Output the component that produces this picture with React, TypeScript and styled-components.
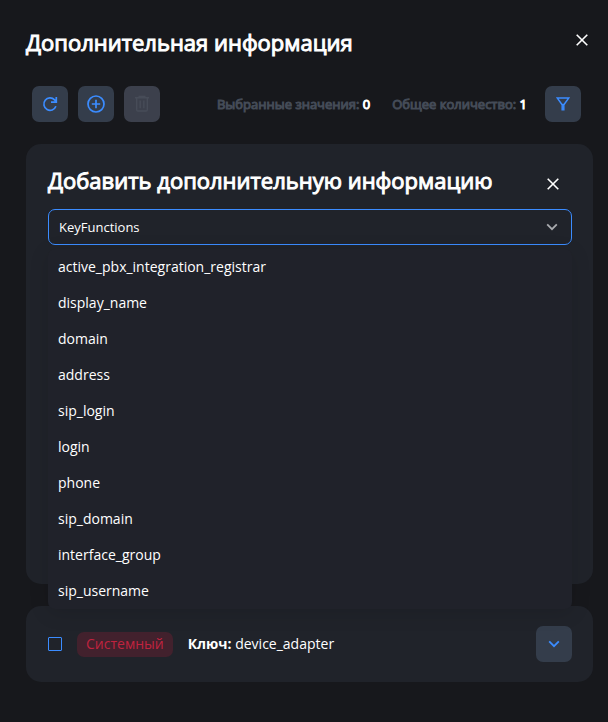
import React, { useState } from "react";
import styled, { createGlobalStyle, css } from "styled-components";

const color = {
  page: "#17181c",
  card: "#20232a",
  menu: "#20222a",
  button: "#343d4b",
  disabled: "#3c404c",
  disabledIcon: "#474c58",
  accent: "#3b8cff",
  text: "#ffffff",
  muted: "#444b57",
  danger: "#c0233f",
  dangerBg: "#42212d",
  chevron: "#a9abaf",
};

const GlobalStyle = createGlobalStyle`
  *, *::before, *::after { box-sizing: border-box; }
  body {
    margin: 0;
    background: ${color.page};
    color: ${color.text};
    font-family: "Open Sans", "Noto Sans", sans-serif;
    font-size: 14px;
    line-height: 20px;
  }
  button, input, select { font: inherit; color: inherit; }
`;

const heavy = css`
  font-weight: 400;
  -webkit-text-stroke: 1px currentColor;
`;

const Page = styled.main`
  display: flex;
  flex-direction: column;
  min-height: 100vh;
  padding: 26px 15px 40px 26px;
`;

const Header = styled.header`
  display: flex;
  align-items: flex-start;
  justify-content: space-between;
`;

const Title = styled.h1`
  margin: 0;
  font-size: 22px;
  line-height: 32px;
  ${heavy}
`;

const CloseButton = styled.button`
  display: flex;
  align-items: center;
  justify-content: center;
  width: 28px;
  height: 28px;
  margin-right: -3px;
  padding: 0;
  border: 0;
  background: none;
  cursor: pointer;
`;

const Toolbar = styled.div`
  display: flex;
  align-items: center;
  justify-content: space-between;
  margin: 28px 12px 22px 6px;
`;

const Group = styled.div<{ $gap: number }>`
  display: flex;
  align-items: center;
  gap: ${({ $gap }) => $gap}px;
`;

const IconButton = styled.button`
  display: flex;
  align-items: center;
  justify-content: center;
  flex: none;
  width: 36px;
  height: 36px;
  padding: 0;
  border: 0;
  border-radius: 7px;
  background: ${color.button};
  color: ${color.accent};
  cursor: pointer;

  &:disabled {
    background: ${color.disabled};
    color: ${color.disabledIcon};
    cursor: default;
  }
`;

const Counter = styled.span`
  color: ${color.muted};
  font-size: 13px;
  white-space: nowrap;
  ${heavy}
`;

const Count = styled.b`
  color: ${color.text};
  ${heavy}
`;

const Card = styled.section<{ $tall?: boolean }>`
  padding: 20px 21px 20px 22px;
  border-radius: 15px;
  background: ${color.card};
  ${({ $tall }) =>
    $tall
      ? css`
          min-height: 440px;
          margin-bottom: 22px;
        `
      : css`
          display: flex;
          align-items: center;
          justify-content: space-between;
        `}
`;

const CardHeader = styled.div`
  display: flex;
  align-items: flex-start;
  justify-content: space-between;
  min-height: 34px;
  margin-bottom: 11px;
  padding-right: 8px;

  ${CloseButton} { align-self: flex-end; }
`;

const Field = styled.div`
  position: relative;
`;

const SelectBox = styled.select`
  display: block;
  width: 100%;
  height: 36px;
  padding: 0 36px 0 10px;
  border: 1px solid ${color.accent};
  border-radius: 7px;
  outline: 0;
  appearance: none;
  background: ${color.card};
  font-size: 13px;
`;

const FieldIcon = styled.span`
  position: absolute;
  top: 0;
  right: 14px;
  display: flex;
  align-items: center;
  height: 36px;
  color: ${color.chevron};
  pointer-events: none;
`;

const Menu = styled.ul`
  position: absolute;
  z-index: 1;
  top: 100%;
  left: 0;
  right: 0;
  margin: 4px 0 0;
  padding: 0;
  list-style: none;
  border-radius: 7px;
  background: ${color.menu};
  box-shadow: 0 4px 20px rgba(0, 0, 0, 0.12);
`;

const MenuItem = styled.li`
  height: 36px;
  padding: 0 10px;
  line-height: 36px;
  cursor: pointer;
`;

const Check = styled.input`
  flex: none;
  width: 14px;
  height: 14px;
  margin: 0;
  border: 1px solid ${color.accent};
  border-radius: 1px;
  appearance: none;

  &:checked { background: ${color.accent}; }
`;

const Tag = styled.span`
  padding: 2px 9px 3px;
  border-radius: 7px;
  background: ${color.dangerBg};
  color: ${color.danger};
`;

const CloseIcon = () => (
  <svg width="12" height="12" viewBox="0 0 12 12" fill="none" stroke="#fff" strokeWidth="1.6" aria-hidden="true">
    <path d="M.7.7l10.6 10.6M11.3.7L.7 11.3" />
  </svg>
);

const RefreshIcon = () => (
  <svg width="18" height="18" viewBox="0 0 18 18" fill="none" stroke="currentColor" strokeWidth="1.7" aria-hidden="true">
    <path d="M14.9 11.3A6.2 6.2 0 1 1 13.6 4.9L15.2 6.6M15.3 2v5.2H10" />
  </svg>
);

const PlusIcon = () => (
  <svg width="18" height="18" viewBox="0 0 18 18" fill="none" stroke="currentColor" strokeWidth="1.7" aria-hidden="true">
    <circle cx="9" cy="9" r="8" />
    <path d="M9 4.8v8.4M4.8 9h8.4" />
  </svg>
);

const TrashIcon = () => (
  <svg width="16" height="18" viewBox="0 0 16 18" fill="none" stroke="currentColor" strokeWidth="1.4" aria-hidden="true">
    <path d="M1 2.7h14M5.2 2.4V1.4h5.6v1M2.7 2.7v12.1q0 1.2 1.2 1.2h8.2q1.2 0 1.2-1.2V2.7M6.2 5.5v7.8M9.8 5.5v7.8" />
  </svg>
);

const FilterIcon = () => (
  <svg width="14" height="14" viewBox="0 0 14 14" fill="none" stroke="currentColor" strokeWidth="1.5" aria-hidden="true">
    <path d="M1.2.9h11.6L8.1 7.4H5.9zM6.2 7.4v6.2M7.8 7.4v6.2" />
  </svg>
);

const ChevronIcon = () => (
  <svg width="12" height="8" viewBox="0 0 12 8" fill="none" stroke="currentColor" strokeWidth="1.8" aria-hidden="true">
    <path d="M1.2 1.4L6 6.2l4.8-4.8" />
  </svg>
);

const keys = [
  "active_pbx_integration_registrar",
  "display_name",
  "domain",
  "address",
  "sip_login",
  "login",
  "phone",
  "sip_domain",
  "interface_group",
  "sip_username",
];

export default function App() {
  const [selected, setSelected] = useState("KeyFunctions");

  return (
    <>
      <GlobalStyle />
      <Page>
        <Header>
          <Title>Дополнительная информация</Title>
          <CloseButton type="button" aria-label="Закрыть">
            <CloseIcon />
          </CloseButton>
        </Header>

        <Toolbar>
          <Group $gap={10}>
            <IconButton type="button" aria-label="Обновить">
              <RefreshIcon />
            </IconButton>
            <IconButton type="button" aria-label="Добавить">
              <PlusIcon />
            </IconButton>
            <IconButton type="button" aria-label="Удалить" disabled>
              <TrashIcon />
            </IconButton>
          </Group>
          <Group $gap={18}>
            <Group $gap={22}>
              <Counter>
                Выбранные значения: <Count>0</Count>
              </Counter>
              <Counter>
                Общее количество: <Count>1</Count>
              </Counter>
            </Group>
            <IconButton type="button" aria-label="Фильтр">
              <FilterIcon />
            </IconButton>
          </Group>
        </Toolbar>

        <Card $tall>
          <CardHeader>
            <Title as="h2">Добавить дополнительную информацию</Title>
            <CloseButton type="button" aria-label="Закрыть форму">
              <CloseIcon />
            </CloseButton>
          </CardHeader>
          <Field>
            <SelectBox aria-label="Ключ" value={selected} onChange={(e) => setSelected(e.target.value)}>
              {["KeyFunctions", ...keys].map((key) => (
                <option key={key}>{key}</option>
              ))}
            </SelectBox>
            <FieldIcon>
              <ChevronIcon />
            </FieldIcon>
            <Menu role="listbox" aria-label="Ключи">
              {keys.map((key) => (
                <MenuItem key={key} role="option" aria-selected={key === selected} onClick={() => setSelected(key)}>
                  {key}
                </MenuItem>
              ))}
            </Menu>
          </Field>
        </Card>

        <Card>
          <Group $gap={15}>
            <Check type="checkbox" aria-label="device_adapter" />
            <Tag>Системный</Tag>
            <span>
              <b>Ключ:</b> device_adapter
            </span>
          </Group>
          <IconButton type="button" aria-label="Развернуть">
            <ChevronIcon />
          </IconButton>
        </Card>
      </Page>
    </>
  );
}
